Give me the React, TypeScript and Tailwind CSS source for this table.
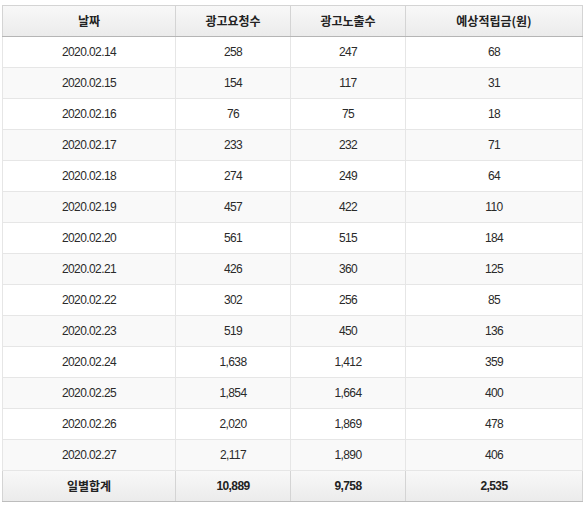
const rows: [string, string, string, string][] = [
  ['2020.02.14', '258', '247', '68'],
  ['2020.02.15', '154', '117', '31'],
  ['2020.02.16', '76', '75', '18'],
  ['2020.02.17', '233', '232', '71'],
  ['2020.02.18', '274', '249', '64'],
  ['2020.02.19', '457', '422', '110'],
  ['2020.02.20', '561', '515', '184'],
  ['2020.02.21', '426', '360', '125'],
  ['2020.02.22', '302', '256', '85'],
  ['2020.02.23', '519', '450', '136'],
  ['2020.02.24', '1,638', '1,412', '359'],
  ['2020.02.25', '1,854', '1,664', '400'],
  ['2020.02.26', '2,020', '1,869', '478'],
  ['2020.02.27', '2,117', '1,890', '406'],
];

const headers = ['날짜', '광고요청수', '광고노출수', '예상적립금(원)'];
const total = ['일별합계', '10,889', '9,758', '2,535'];
const widths = ['w-[173px]', 'w-[115px]', 'w-[115px]', 'w-[177px]'];

export default function App() {
  return (
    <div className="min-h-[507px] bg-white pl-[2px] pt-[5px] font-['Liberation_Sans','Noto_Sans_CJK_KR',sans-serif] text-[12px] text-[#2a2a2a]">
      <table className="w-[581px] table-fixed border-collapse border border-[#d4d4d4] border-b-[#bdbdbd]">
        <thead>
          <tr className="bg-gradient-to-b from-[#f8f8f8] to-[#ebebeb]">
            {headers.map((h, i) => (
              <th
                key={h}
                className={`${widths[i]} h-[31px] border border-[#d4d4d4] border-b-[#b5b5b5] p-0 text-center font-bold text-[#222] font-['Noto_Sans_CJK_KR',sans-serif]`}
              >
                {h}
              </th>
            ))}
          </tr>
        </thead>
        <tbody>
          {rows.map((r, idx) => (
            <tr key={r[0]} className={idx % 2 === 0 ? 'bg-white' : 'bg-[#f9f9f9]'}>
              {r.map((c, i) => (
                <td key={i} className="h-[31px] border border-[#e6e6e6] p-0 text-center tracking-[-0.6px]">
                  {c}
                </td>
              ))}
            </tr>
          ))}
          <tr className="bg-gradient-to-b from-[#f8f8f8] to-[#ebebeb]">
            {total.map((c, i) => (
              <td
                key={i}
                className={`h-[31px] border border-[#d4d4d4] border-b-[#bdbdbd] p-0 text-center font-bold text-[#222] ${
                  i === 0 ? "font-['Noto_Sans_CJK_KR',sans-serif]" : 'tracking-[-0.6px]'
                }`}
              >
                {c}
              </td>
            ))}
          </tr>
        </tbody>
      </table>
    </div>
  );
}
